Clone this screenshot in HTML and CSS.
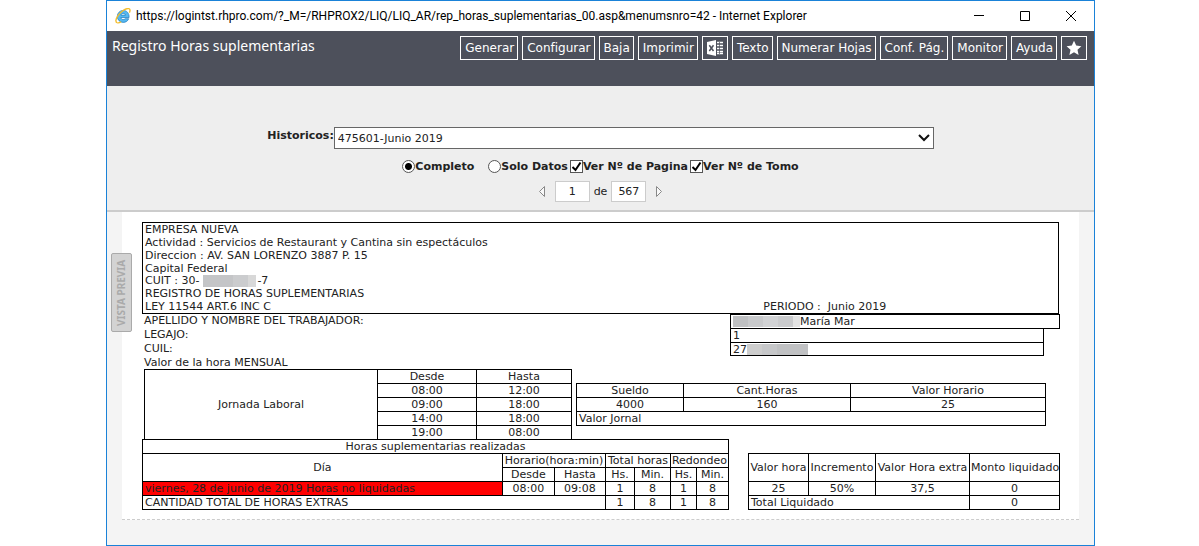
FILE: index.html
```html
<!DOCTYPE html>
<html lang="es">
<head>
<meta charset="utf-8">
<title>Registro Horas suplementarias</title>
<link rel="stylesheet" href="styles.css">
</head>
<body>
<div class="window">
  <header class="titlebar">
    <svg class="ie-logo" viewBox="0 0 16 16" aria-hidden="true">
      <path d="M8.200 2.400a5.900 5.900 0 0 0-5.900 6 5.900 5.900 0 0 0 5.900 6c2.600 0 4.700-1.400 5.500-3.700h-3.600c-.5.600-1.100.8-1.900.8-1.300 0-2.200-.8-2.300-2h8.200c.2-4.200-2.200-7.100-5.900-7.100zM5.900 7.100c.3-1.100 1.200-1.700 2.300-1.700s2 .6 2.300 1.700z" fill="#55b8f0" stroke="#1b78bd" stroke-width=".7"/>
      <path d="M2.600 14.900C.2 14.700.3 11.300 3 7.600 6 3.400 11-.1 13.900.7c1.400.4 1.400 2 .5 3.900" fill="none" stroke="#f3bd2c" stroke-width="1.400"/>
      <path d="M2.600 14.900c1 .2 2.300-.3 3.600-1.100" fill="none" stroke="#f3bd2c" stroke-width="1.200"/>
    </svg>
    <span class="titlebar-text">https://logintst.rhpro.com/?_M=/RHPROX2/LIQ/LIQ_AR/rep_horas_suplementarias_00.asp&amp;menumsnro=42 - Internet Explorer</span>
    <div class="window-controls">
      <button type="button" aria-label="Minimizar"><svg viewBox="0 0 12 12"><path d="M1 5.500h10"/></svg></button>
      <button type="button" aria-label="Maximizar"><svg viewBox="0 0 12 12"><path d="M1.500 1.500h9v9h-9z"/></svg></button>
      <button type="button" aria-label="Cerrar"><svg viewBox="0 0 12 12"><path d="M1 1l10 10M11 1L1 11"/></svg></button>
    </div>
  </header>

  <div class="appbar">
    <h1 class="page-title">Registro Horas suplementarias</h1>
    <nav class="toolbar">
      <button type="button">Generar</button>
      <button type="button">Configurar</button>
      <button type="button">Baja</button>
      <button type="button">Imprimir</button>
      <button type="button" class="icon-button" aria-label="Excel">
        <svg viewBox="0 0 16 16"><path d="M0 2l9-2v16l-9-2z" fill="#fff"/><path d="M2.300 5.200l4.200 5.800M6.500 5.200l-4.200 5.800" stroke="#4d505b" stroke-width="1.500"/><path d="M10 2.500h6M10 5.500h6M10 8.500h6M10 11.500h6M10 13.500h6" stroke="#fff" stroke-width="1.700"/><path d="M12.500 2v12" stroke="#4d505b" stroke-width=".7"/></svg>
      </button>
      <button type="button">Texto</button>
      <button type="button">Numerar Hojas</button>
      <button type="button">Conf. Pág.</button>
      <button type="button">Monitor</button>
      <button type="button">Ayuda</button>
      <button type="button" class="icon-button" aria-label="Favorito">
        <svg viewBox="0 0 16 16"><path d="M8 .8l2.200 4.800 5.200.6-3.900 3.500 1.100 5.200L8 12.300l-4.600 2.600 1.100-5.200L.6 6.200l5.200-.6z" fill="#fff"/></svg>
      </button>
    </nav>
  </div>

  <form class="filters">
    <div class="filter-row">
      <label for="historicos">Historicos:</label>
      <select id="historicos" class="history"><option>475601-Junio 2019</option></select>
    </div>
    <div class="options">
      <label class="option option-wide"><input type="radio" name="modo" checked>Completo</label>
      <label class="option"><input type="radio" name="modo">Solo Datos</label>
      <label class="option"><input type="checkbox" checked>Ver Nº de Pagina</label>
      <label class="option"><input type="checkbox" checked>Ver Nº de Tomo</label>
    </div>
    <div class="pager">
      <button type="button" aria-label="Anterior"><svg viewBox="0 0 8 13"><path d="M6.500 1.500v10L1.500 6.500z"/></svg></button>
      <input type="text" value="1" aria-label="Página">
      <span>de</span>
      <input type="text" value="567" aria-label="Total de páginas">
      <button type="button" aria-label="Siguiente"><svg viewBox="0 0 8 13"><path d="M1.500 1.500v10l5-5z"/></svg></button>
    </div>
  </form>

  <main class="preview">
    <button type="button" class="side-tab">VISTA PREVIA</button>
    <article class="paper">
      <section class="company">
        <div>EMPRESA NUEVA</div>
        <div>Actividad : Servicios de Restaurant y Cantina sin espectáculos</div>
        <div>Direccion : AV. SAN LORENZO 3887 P. 15</div>
        <div>Capital Federal</div>
        <div class="masked-line">CUIT : 30-<span class="mask mask-cuit"></span>-7</div>
        <div>REGISTRO DE HORAS SUPLEMENTARIAS</div>
        <div class="law"><span>LEY 11544 ART.6 INC C</span><span>PERIODO :&nbsp; Junio 2019</span></div>
      </section>

      <section class="worker">
        <span>APELLIDO Y NOMBRE DEL TRABAJADOR:</span>
        <div class="field field-name"><span class="mask mask-name"></span>María Mar</div>
        <span>LEGAJO:</span>
        <div class="field">1</div>
        <span>CUIL:</span>
        <div class="field field-last">27<span class="mask mask-cuil"></span></div>
        <span>Valor de la hora MENSUAL</span>
      </section>

      <section class="schedule">
        <table class="grid-table workday">
          <colgroup><col class="wd-name"><col class="wd-from"><col></colgroup>
          <tr><td rowspan="5">Jornada Laboral</td><td>Desde</td><td>Hasta</td></tr>
          <tr><td>08:00</td><td>12:00</td></tr>
          <tr><td>09:00</td><td>18:00</td></tr>
          <tr><td>14:00</td><td>18:00</td></tr>
          <tr><td>19:00</td><td>08:00</td></tr>
        </table>
        <table class="grid-table salary">
          <colgroup><col class="sa-pay"><col class="sa-hours"><col></colgroup>
          <tr><td>Sueldo</td><td>Cant.Horas</td><td>Valor Horario</td></tr>
          <tr><td>4000</td><td>160</td><td>25</td></tr>
          <tr><td colspan="3" class="left">Valor Jornal</td></tr>
        </table>
      </section>

      <section class="totals">
        <table class="grid-table extra">
          <colgroup><col><col class="ex-from"><col class="ex-to"><col class="ex-hours"><col class="ex-minutes"><col class="ex-round-hours"><col class="ex-round-minutes"></colgroup>
          <tr><td colspan="7">Horas suplementarias realizadas</td></tr>
          <tr><td rowspan="2">Día</td><td colspan="2">Horario(hora:min)</td><td colspan="2">Total horas</td><td colspan="2">Redondeo</td></tr>
          <tr><td>Desde</td><td>Hasta</td><td>Hs.</td><td>Min.</td><td>Hs.</td><td>Min.</td></tr>
          <tr><td class="left pending">viernes, 28 de junio de 2019 Horas no liquidadas</td><td>08:00</td><td>09:08</td><td>1</td><td>8</td><td>1</td><td>8</td></tr>
          <tr><td colspan="3" class="left">CANTIDAD TOTAL DE HORAS EXTRAS</td><td>1</td><td>8</td><td>1</td><td>8</td></tr>
        </table>
        <table class="grid-table payment">
          <colgroup><col class="pa-hour"><col class="pa-inc"><col class="pa-extra"><col></colgroup>
          <tr class="tall"><td>Valor hora</td><td>Incremento</td><td>Valor Hora extra</td><td>Monto liquidado</td></tr>
          <tr><td>25</td><td>50%</td><td>37,5</td><td>0</td></tr>
          <tr><td colspan="3" class="left">Total Liquidado</td><td>0</td></tr>
        </table>
      </section>
    </article>
  </main>
</div>
</body>
</html>
```
FILE: styles.css
```css
* { box-sizing: border-box; }

body {
  margin: 0;
  background: #fff;
  color: #222;
  font: 11px/13px "DejaVu Sans", sans-serif;
}

button, input, select { font: inherit; color: inherit; margin: 0; }
button { padding: 0; border: 0; background: none; }
svg { display: block; fill: none; }

.window {
  display: flex;
  flex-direction: column;
  min-height: 100vh;
  margin: 0 104px 0 106px;
  border: 1px solid #1a82d8;
  background: #f4f4f4;
}

/* Title bar */
.titlebar {
  display: flex;
  align-items: center;
  height: 30px;
  padding: 0 17px 0 8px;
  background: #fff;
  color: #000;
  font: 12px/16px Roboto, sans-serif;
  white-space: nowrap;
}
.ie-logo { width: 16px; height: 16px; margin-right: 5px; }
.titlebar-text { flex: 1; }
.window-controls { display: flex; gap: 34px; }
.window-controls svg { width: 12px; height: 12px; stroke: #000; }

/* Application bar */
.appbar {
  display: flex;
  justify-content: space-between;
  align-items: flex-start;
  min-height: 55px;
  padding: 5px 7px 0 5px;
  background: #4d505b;
  color: #fff;
}
.page-title { margin: 0; font: 14px/20px "Noto Sans", sans-serif; }
.toolbar { display: flex; gap: 4px; font-size: 12px; }
.toolbar button {
  height: 24px;
  padding: 0 3px 0 4px;
  border: 1px solid #fff;
  white-space: nowrap;
}
.toolbar .icon-button { padding: 0 4px; }
.toolbar svg { width: 16px; height: 16px; }

/* Filters */
.filters {
  display: flex;
  flex-direction: column;
  align-items: center;
  padding: 41px 0 8px;
  border-bottom: 2px solid #ccc;
  background: #eee;
}
.filter-row { display: flex; }
.filter-row label { padding-top: 2px; font-weight: bold; }
.history {
  appearance: none;
  width: 600px;
  height: 22px;
  padding: 0 3px;
  border: 1px solid #666;
  border-radius: 0;
  background: #fff url("data:image/svg+xml,%3Csvg xmlns='http://www.w3.org/2000/svg' width='12' height='8'%3E%3Cpath d='M1 1l5 5 5-5' fill='none' stroke='%23111' stroke-width='2'/%3E%3C/svg%3E") no-repeat right 3px top 6px;
}
.options { display: flex; gap: 2px; margin-top: 11px; font-weight: bold; }
.option { display: flex; align-items: center; }
.option-wide { margin-right: 12px; }
.option input {
  appearance: none;
  width: 13px;
  height: 13px;
  border: 1px solid #555;
  background: #fff no-repeat center;
}
.option input[type="radio"] { border-radius: 50%; }
.option input[type="radio"]:checked { background-image: radial-gradient(circle, #000 3px, transparent 4px); }
.option input[type="checkbox"]:checked {
  background-image: url("data:image/svg+xml,%3Csvg xmlns='http://www.w3.org/2000/svg' width='11' height='11'%3E%3Cpath d='M1.500 6l3 3 5-7.500' fill='none' stroke='%23000' stroke-width='2'/%3E%3C/svg%3E");
}
.pager { display: flex; align-items: center; gap: 4px; margin-top: 8px; }
.pager input {
  width: 35px;
  height: 21px;
  padding: 0;
  border: 1px solid #ccc;
  background: #fff;
  text-align: center;
}
.pager svg { width: 8px; height: 13px; margin: 0 5px; fill: #f8f8f8; stroke: #888; }

/* Preview */
.preview { position: relative; flex: 1; padding: 0 15px; }
.side-tab {
  position: absolute;
  left: 4px;
  top: 41px;
  width: 21px;
  height: 79px;
  border: 1px solid #aaa;
  border-radius: 2px;
  background: #d3d3d3;
  color: #aaa;
  font: bold 10px/13px "Noto Sans", sans-serif;
  writing-mode: vertical-rl;
  transform: rotate(180deg);
  white-space: nowrap;
}
.paper {
  padding: 10px 19px 9px 20px;
  border-bottom: 1px dashed #ccc;
  background: #fff;
}
.company { margin-right: 1px; padding: 0 2px; border: 1px solid #000; }
.masked-line { display: flex; line-height: 12px; }
.law { display: grid; grid-template-columns: 619fr 293fr; }
.mask { display: inline-block; height: 12px; }
.mask-cuit { width: 53px; margin: 0 1px 0 4px; background: linear-gradient(90deg, #c4c5c7 0 30px, #cbccce 30px 45px, #d8d8d8 45px); }
.mask-name { width: 67px; height: 11px; background: linear-gradient(90deg, #bfc0c2 0 15px, #c9cacc 15px 30px, #d2d3d5 30px 45px, #cacbcd 45px 60px, #e3e3e3 60px); }
.mask-cuil { width: 61px; height: 11px; background: linear-gradient(90deg, #cdcdcd 0 15px, #c6c7c9 15px 30px, #c0c1c3 30px); }

.worker {
  display: grid;
  grid-template-columns: 586fr 330fr;
  grid-auto-rows: 14px;
  padding-left: 2px;
  line-height: 14px;
}
.field {
  display: flex;
  align-items: center;
  width: 95%;
  padding: 0 2px;
  border: solid #000;
  border-width: 0 1px;
  line-height: 13px;
}
.field-name { width: 100%; height: 15px; border-width: 1px; }
.field-last { border-width: 1px; }

.grid-table {
  border-collapse: collapse;
  table-layout: fixed;
  width: 100%;
  text-align: center;
}
.grid-table td { height: 14px; padding: 0 1px; border: 1px solid #000; white-space: nowrap; }
.grid-table .tall td { height: 28px; }
.grid-table td.left { padding-left: 2px; text-align: left; }
.grid-table td.pending { background: #f00; }

.schedule {
  display: grid;
  grid-template-columns: 428fr 470fr;
  gap: 4px;
  align-items: center;
  margin: -1px 14px 0 2px;
}
.wd-from { width: 99px; }
.wd-name { width: 233px; }
.sa-pay { width: 107px; }
.sa-hours { width: 167px; }

.totals {
  display: grid;
  grid-template-columns: 587fr 312fr;
  gap: 19px;
  align-items: end;
  margin-top: -1px;
}
.ex-from { width: 52px; }
.ex-to { width: 51px; }
.ex-hours { width: 29px; }
.ex-minutes { width: 36px; }
.ex-round-hours { width: 26px; }
.ex-round-minutes { width: 32px; }
.pa-hour { width: 60px; }
.pa-inc { width: 67px; }
.pa-extra { width: 94px; }
```
